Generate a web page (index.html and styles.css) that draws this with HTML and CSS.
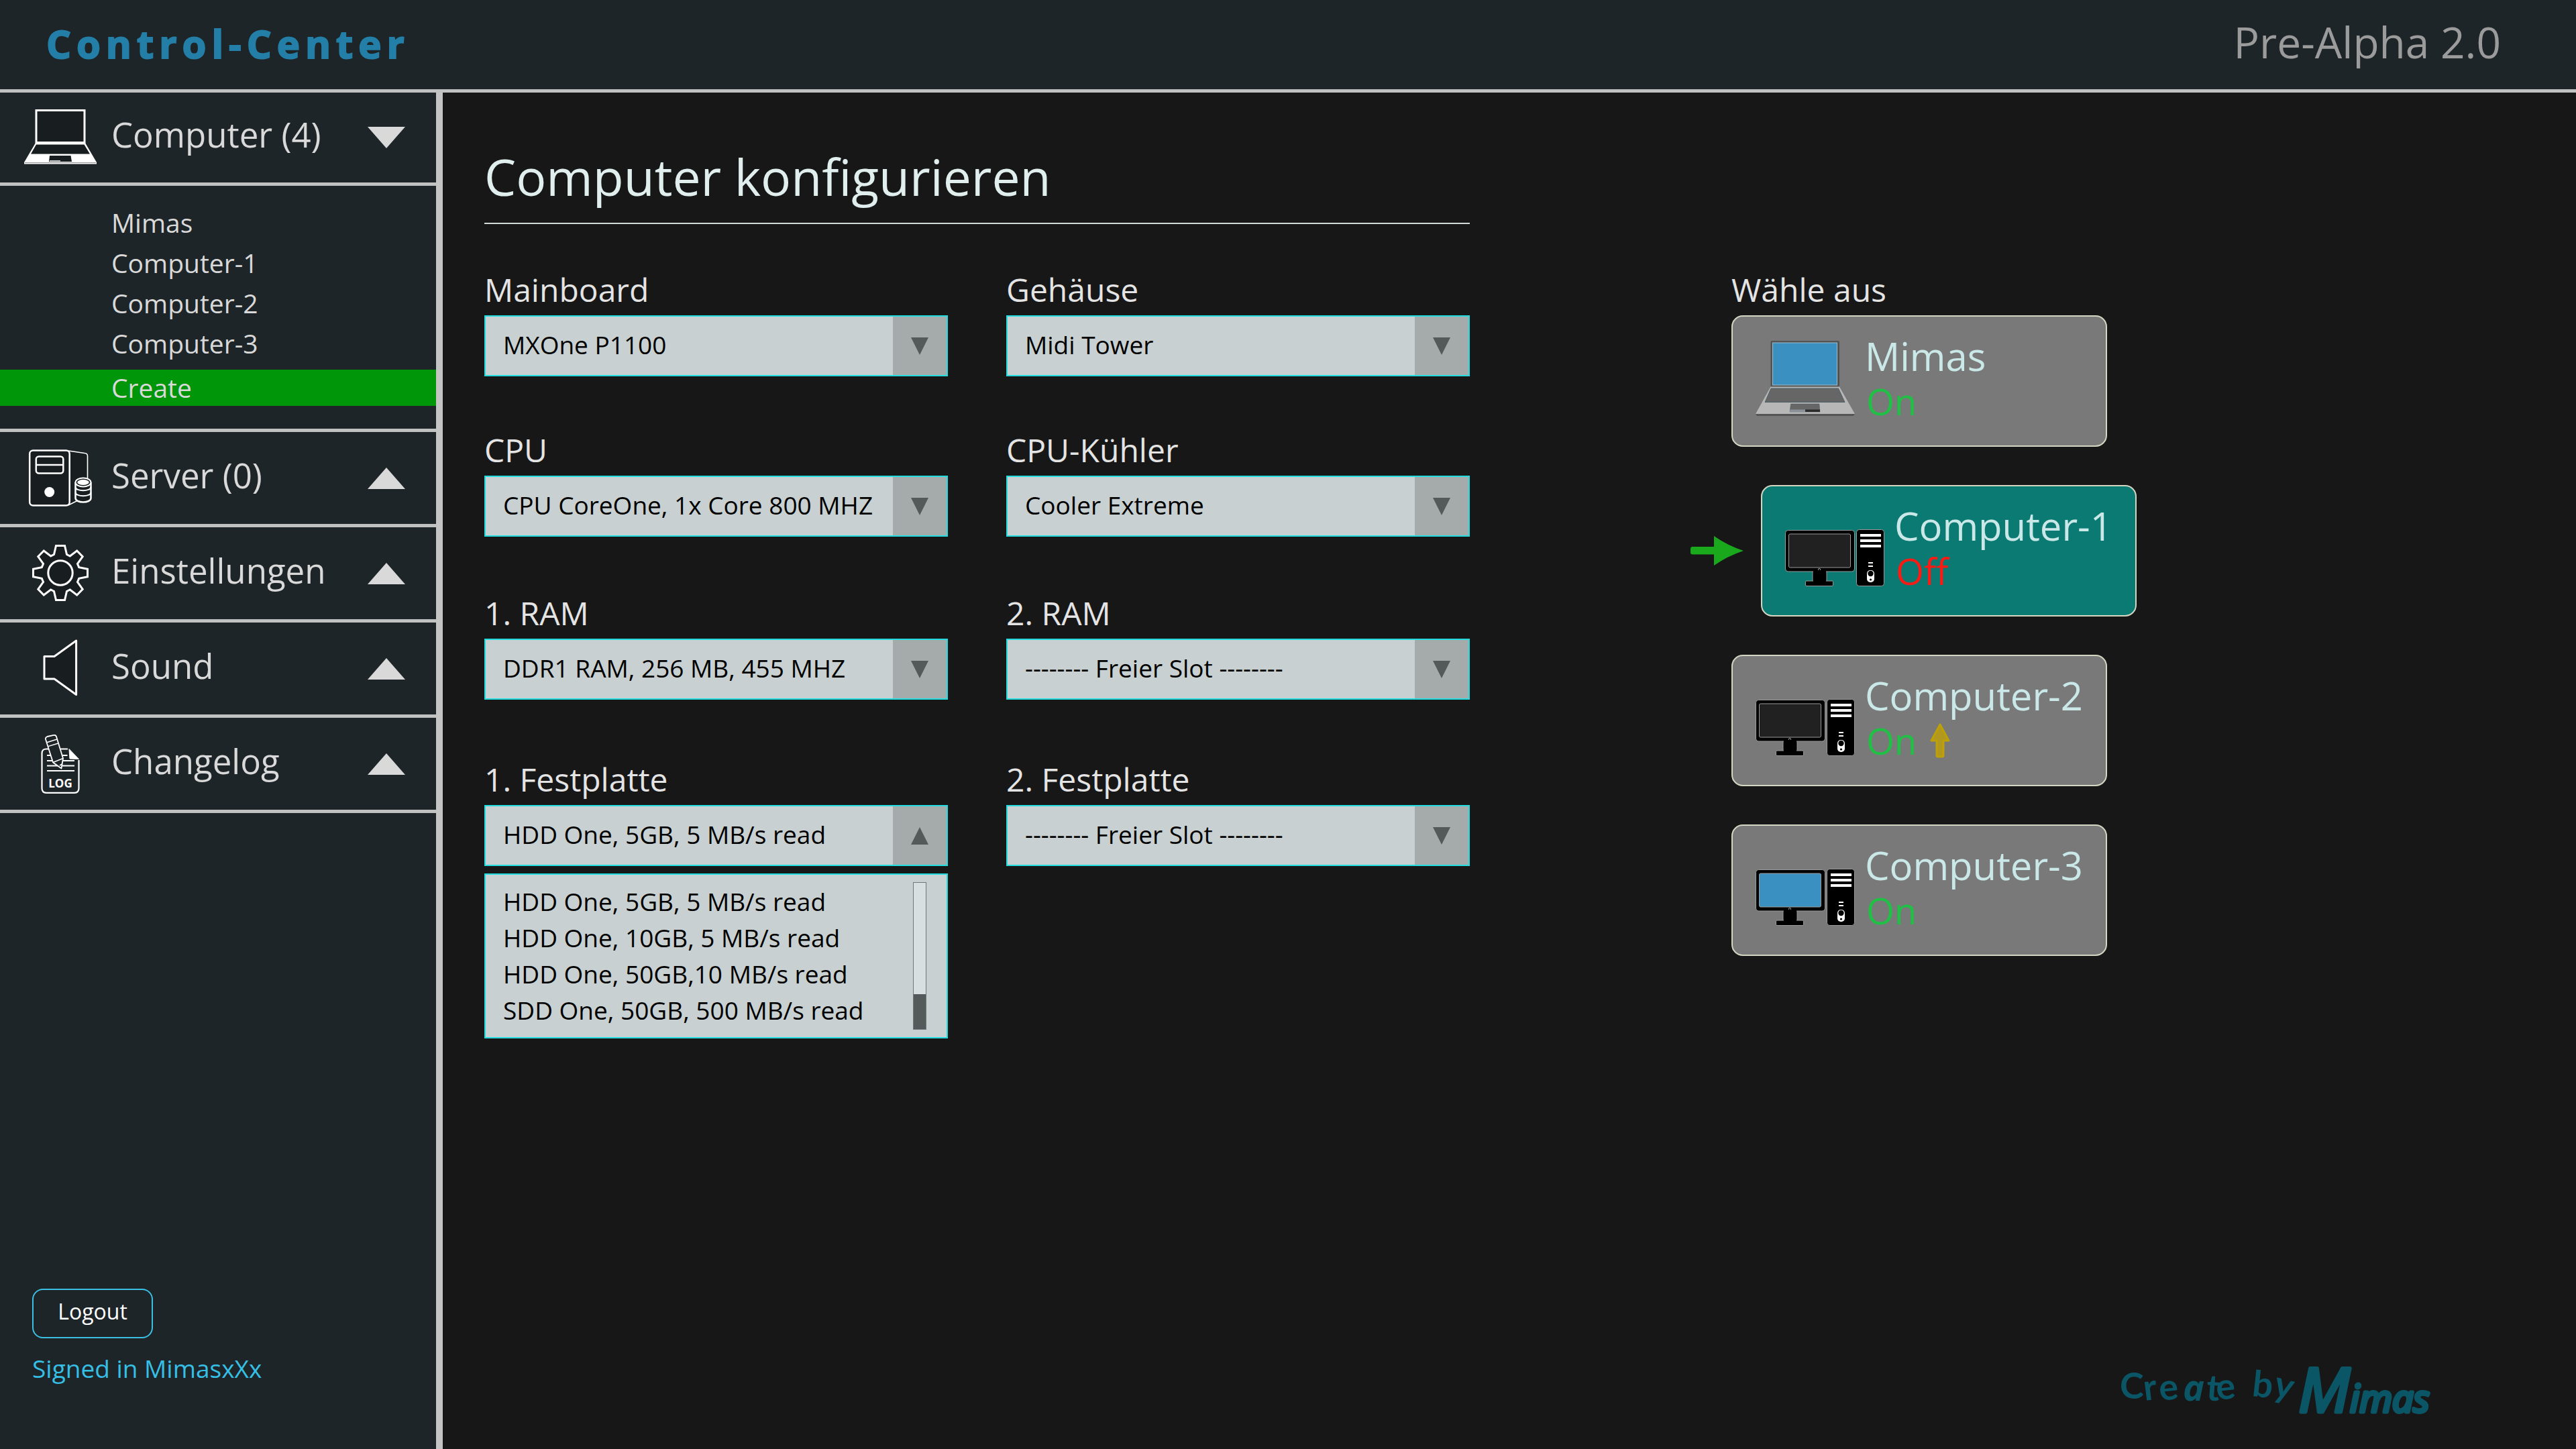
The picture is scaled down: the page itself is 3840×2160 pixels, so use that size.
FILE: index.html
```html
<!DOCTYPE html>
<html lang="de">
<head>
<meta charset="utf-8">
<meta name="viewport" content="width=device-width, initial-scale=1">
<title>Control-Center</title>
<link rel="stylesheet" href="styles.css">
</head>
<body>
<svg class="sprite" aria-hidden="true">
  <symbol id="pc" viewBox="0 0 148 114">
    <g stroke="#9a9a9a" stroke-width="1">
      <rect x="41" y="90" width="21" height="18" fill="#000"/>
      <rect x="30.500" y="106" width="41" height="7.500" rx="1.500" fill="#000"/>
      <rect x=".5" y="30.500" width="103" height="61.500" rx="4" fill="#000"/>
      <rect x="106.500" y="29.500" width="41" height="84" rx="4" fill="#000"/>
      <rect x="5.500" y="36" width="92" height="50" rx="2" fill="currentColor"/>
      <circle cx="51" cy="89" r="1.600" fill="#000"/>
    </g>
    <path d="M42 90h19v17H42z" fill="#000"/>
    <g fill="#fff">
      <path d="M112 36h31v4h-31zM112 44h31v4h-31zM112 52h31v4h-31zM124 78h7v2h-7zM124 83h7v2h-7z"/>
      <rect x="122" y="90" width="11" height="18" rx="5"/>
    </g>
    <circle cx="127.500" cy="95" r="4.200"/>
    <circle cx="127.500" cy="104" r="1.600"/>
  </symbol>
  <symbol id="laptop" viewBox="0 0 148 114">
    <rect x="22.500" y="1" width="102.500" height="69" rx="2" fill="#535353"/>
    <rect x="25.500" y="4" width="96" height="63" fill="#3a91c1" stroke="#9bbccb"/>
    <path d="M22.500 69.500H125L148 110H0z" fill="#b7b7b7"/>
    <path d="M0 110h148l-2 3H2z" fill="#555"/>
    <path d="M23 72h100.500l9.500 20.500H14z" fill="#666" stroke="#4d5f66"/>
    <path d="M52.500 95H95l1 12H51z" fill="#666" stroke="#4d5f66" stroke-width=".5"/>
    <path d="M51.500 103.500H74v3.500H51z" fill="#8a9199"/>
    <path d="M74 103.500h22v3.500H74z" fill="#2b2b2b"/>
  </symbol>
  <symbol id="up" viewBox="0 0 56 32"><path d="M28 0L56 32H0z" fill="#d9d9d9"/></symbol>
  <symbol id="down" viewBox="0 0 56 32"><path d="M0 0h56L28 32z" fill="#d9d9d9"/></symbol>
  <symbol id="caret-down" viewBox="0 0 26 26"><path d="M0 0h26L13 26z" fill="#545a5a"/></symbol>
  <symbol id="caret-up" viewBox="0 0 26 26"><path d="M13 0l13 26H0z" fill="#545a5a"/></symbol>
</svg>

<header class="topbar">
  <span class="brand">Control-Center</span>
  <span class="version">Pre-Alpha 2.0</span>
</header>

<div class="layout">
  <aside class="sidebar">
    <nav class="nav">
      <button class="nav-row" type="button" aria-expanded="true">
        <svg class="nav-icon" viewBox="0 0 108 88" aria-hidden="true">
          <g transform="translate(0 1)">
            <rect x="18" y="2.500" width="72" height="48" fill="#181d1f" stroke="#fff" stroke-width="3"/>
            <path d="M17 51h74l17 29v2.500H0V80z" fill="#fff"/>
            <path d="M18 53.500h71.500l8.500 14H10z" fill="#181d1f"/>
            <path d="M38 70h31.500l1.500 9H37z" fill="#181d1f"/>
            <path d="M38 77h16v1.500H38z" fill="#ddd"/>
            <path d="M1 80.500h106" stroke="#777" stroke-width=".8"/>
          </g>
        </svg>
        <span class="nav-label">Computer (4)</span>
        <svg class="nav-arrow" aria-hidden="true"><use href="#down"/></svg>
      </button>
      <div class="submenu">
        <ul class="sub-list">
          <li><a class="sub-link" href="#mimas">Mimas</a></li>
          <li><a class="sub-link" href="#computer-1">Computer-1</a></li>
          <li><a class="sub-link" href="#computer-2">Computer-2</a></li>
          <li><a class="sub-link" href="#computer-3">Computer-3</a></li>
        </ul>
        <a class="sub-link sub-create" href="#create" aria-current="page">Create</a>
      </div>
      <button class="nav-row" type="button" aria-expanded="false">
        <svg class="nav-icon" viewBox="0 0 108 88" aria-hidden="true" fill="#181d1f" stroke="#fff" stroke-width="2.500">
          <path d="M66 3L90 6.500q4 .5 4 4V70L66 84z" stroke="none"/>
          <path d="M66 3L90 6.500q4.500.5 4.500 4V44M66 84l14-7" stroke-width="1.600" fill="none"/>
          <rect x="8.200" y="2.500" width="59.500" height="82" rx="5"/>
          <rect x="17.800" y="11.500" width="40.500" height="25" rx="4"/>
          <path d="M18 24h40"/>
          <circle cx="37.700" cy="64.500" r="7.500" fill="#fff" stroke="none"/>
          <path d="M76.500 50v23.500c0 8 23 8 23 0V50"/>
          <ellipse cx="88" cy="50" rx="11.500" ry="6.500" stroke-width="2"/>
          <ellipse cx="88" cy="50" rx="8.800" ry="4" fill="#fff" stroke="none"/>
          <path d="M76.500 57c0 7 23 7 23 0M76.500 65c0 7 23 7 23 0" fill="none" stroke-width="2"/>
        </svg>
        <span class="nav-label">Server (0)</span>
        <svg class="nav-arrow" aria-hidden="true"><use href="#up"/></svg>
      </button>
      <button class="nav-row" type="button" aria-expanded="false">
        <svg class="nav-icon" viewBox="0 0 108 88" aria-hidden="true" fill="#181d1f" stroke="#fff" stroke-width="3">
          <g transform="translate(54 43)">
            <path d="M-6.500-40.500H6.500L9.500-27.500 14.300-25 24.700-33 33.200-24.300 25.500-13.500 27.700-8.400 40.500-5.700V5.700L27.700 8.400 25.500 13.500 33.200 24.300 24.700 33 14.300 25 9.500 27.500 6.500 40.500H-6.500L-9.500 27.500-14.300 25-24.700 33-33.200 24.300-25.500 13.500-27.700 8.400-40.500 5.700V-5.700L-27.700-8.400-25.500-13.500-33.200-24.300-24.700-33-14.300-25-9.500-27.500z"/>
            <circle r="18.200"/>
          </g>
        </svg>
        <span class="nav-label">Einstellungen</span>
        <svg class="nav-arrow" aria-hidden="true"><use href="#up"/></svg>
      </button>
      <button class="nav-row" type="button" aria-expanded="false">
        <svg class="nav-icon" viewBox="0 0 108 88" aria-hidden="true" fill="#181d1f" stroke="#fff" stroke-width="3" stroke-linejoin="round">
          <path d="M30 25.500h15L77.600 2v80.500L45 59H30z"/>
        </svg>
        <span class="nav-label">Sound</span>
        <svg class="nav-arrow" aria-hidden="true"><use href="#up"/></svg>
      </button>
      <button class="nav-row" type="button" aria-expanded="false">
        <svg class="nav-icon" viewBox="0 0 108 88" aria-hidden="true" fill="none" stroke="#fff" stroke-width="1.800" stroke-linejoin="round">
          <path d="M65 21.500H33q-6.500 0-6.500 6.500v52q0 6.800 6.500 6.800h42q6.500 0 6.500-6.800V38" stroke-width="2.200"/>
          <path d="M67 21.500L81.500 36.500 68 36z" fill="#fff" stroke-width="1"/>
          <path d="M34 31h30.500M34 39h41M34 46.500h41M34 54h41"/>
          <path d="M32 7q-.5-3 2.500-4L44 .9q3-.7 4 2L58 35.500 55.500 50.500 43 41.500z" fill="#1e2528"/>
          <path d="M33.800 11.700L49 7M35.600 17.600L51 13M43 41.500l15-6M53 46l3.500-2" stroke-width="1.500"/>
          <text class="log-text" x="54" y="79" text-anchor="middle">LOG</text>
        </svg>
        <span class="nav-label">Changelog</span>
        <svg class="nav-arrow" aria-hidden="true"><use href="#up"/></svg>
      </button>
    </nav>
    <div class="account">
      <button class="logout" type="button">Logout</button>
      <p class="signed">Signed in MimasxXx</p>
    </div>
  </aside>

  <main class="main">
    <div class="content">
      <h1 class="title">Computer konfigurieren</h1>

      <form class="form">
        <div class="field">
          <label for="mainboard">Mainboard</label>
          <div class="select">
            <select id="mainboard"><option>MXOne P1100</option></select>
            <span class="select-btn"><svg aria-hidden="true"><use href="#caret-down"/></svg></span>
          </div>
        </div>
        <div class="field">
          <label for="case">Gehäuse</label>
          <div class="select">
            <select id="case"><option>Midi Tower</option></select>
            <span class="select-btn"><svg aria-hidden="true"><use href="#caret-down"/></svg></span>
          </div>
        </div>
        <div class="field">
          <label for="cpu">CPU</label>
          <div class="select">
            <select id="cpu"><option>CPU CoreOne, 1x Core 800 MHZ</option></select>
            <span class="select-btn"><svg aria-hidden="true"><use href="#caret-down"/></svg></span>
          </div>
        </div>
        <div class="field">
          <label for="cooler">CPU-Kühler</label>
          <div class="select">
            <select id="cooler"><option>Cooler Extreme</option></select>
            <span class="select-btn"><svg aria-hidden="true"><use href="#caret-down"/></svg></span>
          </div>
        </div>
        <div class="field">
          <label for="ram1">1. RAM</label>
          <div class="select">
            <select id="ram1"><option>DDR1 RAM, 256 MB, 455 MHZ</option></select>
            <span class="select-btn"><svg aria-hidden="true"><use href="#caret-down"/></svg></span>
          </div>
        </div>
        <div class="field">
          <label for="ram2">2. RAM</label>
          <div class="select">
            <select id="ram2"><option>-------- Freier Slot --------</option></select>
            <span class="select-btn"><svg aria-hidden="true"><use href="#caret-down"/></svg></span>
          </div>
        </div>
        <div class="field">
          <label for="disk1">1. Festplatte</label>
          <div class="select">
            <select id="disk1"><option>HDD One, 5GB, 5 MB/s read</option></select>
            <span class="select-btn"><svg aria-hidden="true"><use href="#caret-up"/></svg></span>
          </div>
          <div class="dropdown">
            <ul class="options" role="listbox" aria-label="1. Festplatte">
              <li role="option">HDD One, 5GB, 5 MB/s read</li>
              <li role="option">HDD One, 10GB, 5 MB/s read</li>
              <li role="option">HDD One, 50GB,10 MB/s read</li>
              <li role="option">SDD One, 50GB, 500 MB/s read</li>
            </ul>
            <div class="scrollbar"><div class="thumb"></div></div>
          </div>
        </div>
        <div class="field">
          <label for="disk2">2. Festplatte</label>
          <div class="select">
            <select id="disk2"><option>-------- Freier Slot --------</option></select>
            <span class="select-btn"><svg aria-hidden="true"><use href="#caret-down"/></svg></span>
          </div>
        </div>
      </form>

      <section class="picker">
        <h2 class="picker-title">Wähle aus</h2>
        <ul class="cards">
          <li>
            <button class="card" type="button">
              <svg class="card-icon" aria-hidden="true"><use href="#laptop"/></svg>
              <span class="card-text"><span class="name">Mimas</span><span class="status on">On</span></span>
            </button>
          </li>
          <li class="current">
            <svg class="pointer" viewBox="0 0 80 44" aria-hidden="true">
              <path d="M3 16h32V0q20 14 44 22-24 8-44 22V27.500H3q-3 0-3-3V19q0-3 3-3z" fill="#1aa81c"/>
            </svg>
            <button class="card" type="button" aria-pressed="true">
              <svg class="card-icon off-screen" aria-hidden="true"><use href="#pc"/></svg>
              <span class="card-text"><span class="name">Computer-1</span><span class="status off">Off</span></span>
            </button>
          </li>
          <li>
            <button class="card" type="button">
              <svg class="card-icon off-screen" aria-hidden="true"><use href="#pc"/></svg>
              <span class="card-text"><span class="name">Computer-2</span><span class="status on">On
                <svg class="upgrade" viewBox="0 0 30 52" aria-hidden="true"><path d="M15 2L28 26H20v22q0 2-2 2h-6q-2 0-2-2V26H2z" fill="#b3981f" stroke="#bda106" stroke-width="3" stroke-linejoin="round"/></svg>
              </span></span>
            </button>
          </li>
          <li>
            <button class="card" type="button">
              <svg class="card-icon on-screen" aria-hidden="true"><use href="#pc"/></svg>
              <span class="card-text"><span class="name">Computer-3</span><span class="status on">On</span></span>
            </button>
          </li>
        </ul>
      </section>
    </div>

    <footer class="credit">
      <svg class="signature" viewBox="0 0 480 96" role="img" aria-label="Create by Mimas">
        <text class="credit-text" x="0 37 60" y="57 60 60" rotate="0 -7 -6">Cre</text>
        <text class="credit-text slanted" x="94" y="60">a</text>
        <text class="credit-text" x="128 145" y="59 59" rotate="4 -6">te</text>
        <text class="credit-text" x="196 227" y="53 52" rotate="6 14">by</text>
        <text class="mark" x="266" y="77"><tspan class="mark-m">M</tspan><tspan class="mark-s">imas</tspan></text>
      </svg>
    </footer>
  </main>
</div>
</body>
</html>
```
FILE: styles.css
```css
* {
  box-sizing: border-box;
}

body {
  margin: 0;
  min-height: 100vh;
  display: flex;
  flex-direction: column;
  background: #171717;
  color: #e4e4e4;
  font-family: "Open Sans", "Noto Sans", sans-serif;
}

ul {
  list-style: none;
  margin: 0;
  padding: 0;
}

button,
select {
  font: inherit;
  color: inherit;
}

.sprite {
  display: none;
}

/* Top bar */
.topbar {
  display: flex;
  justify-content: space-between;
  align-items: baseline;
  height: 138px;
  padding: 19px 112px 0 69px;
  background: #1e2528;
  border-bottom: 5px solid #c0c2c2;
}

.brand {
  color: #237fa8;
  font-size: 58px;
  font-weight: 700;
  letter-spacing: 8px;
  -webkit-text-stroke: 2px #237fa8;
}

.version {
  color: #9b9b9b;
  font-size: 64px;
}

.layout {
  flex: 1;
  display: flex;
}

/* Sidebar */
.sidebar {
  flex: 0 0 660px;
  display: flex;
  flex-direction: column;
  background: #1e2528;
  border-right: 10px solid #c4c4c4;
}

.nav-row {
  display: flex;
  align-items: center;
  gap: 22px;
  width: 100%;
  height: 142px;
  padding: 0 46px 0 36px;
  background: none;
  border: 0;
  border-bottom: 5px solid #c0c2c2;
  color: #d9d9d9;
  font-size: 51px;
  text-align: left;
}

.nav-row:first-child {
  height: 139px;
}

.nav-icon {
  flex: none;
  width: 108px;
  height: 88px;
}

.nav-label {
  flex: 1;
  padding-bottom: 10px;
}

.nav-arrow {
  flex: none;
  width: 56px;
  height: 32px;
}

.log-text {
  fill: #fff;
  stroke: none;
  font-size: 17px;
  font-weight: 700;
}

.submenu {
  padding: 28px 0 34px;
  border-bottom: 5px solid #c0c2c2;
}

.sub-list {
  display: flex;
  flex-direction: column;
  gap: 6px;
}

.sub-link {
  display: block;
  padding-left: 166px;
  color: #d9d9d9;
  font-size: 39px;
  line-height: 54px;
  text-decoration: none;
}

.sub-create {
  margin-top: 12px;
  background: #00960a;
}

.account {
  margin-top: auto;
  padding: 0 48px 94px;
}

.logout {
  display: block;
  width: 180px;
  height: 74px;
  padding: 0 0 8px;
  background: none;
  border: 2px solid #3bbfe2;
  border-radius: 16px;
  color: #fff;
  font-size: 32px;
}

.signed {
  margin: 19px 0 0;
  color: #36bfe4;
  font-size: 37px;
  line-height: 52px;
}

/* Main area */
.main {
  flex: 1;
  display: flex;
  flex-direction: column;
  justify-content: space-between;
  min-width: 0;
  padding: 73px 62px 36px;
}

.content {
  display: grid;
  grid-template-columns: minmax(0, 1469px) 604px;
  column-gap: 390px;
}

.title {
  margin: 0 0 66px;
  padding-bottom: 17px;
  border-bottom: 2px solid #d3dbda;
  color: #e0eeed;
  font-size: 75px;
  font-weight: 400;
  line-height: 104px;
}

.form {
  grid-column: 1;
  display: grid;
  grid-template-columns: 1fr 1fr;
  grid-template-rows: 239px 243px 248px auto;
  column-gap: 87px;
}

.field label,
.picker-title {
  display: block;
  margin: 0 0 6px;
  font-size: 48px;
  font-weight: 400;
  line-height: 64px;
}

.select {
  display: flex;
  height: 91px;
  background: #c8d0d1;
  border: 2px solid #22dcdf;
}

.select select {
  flex: 1;
  min-width: 0;
  padding: 0 0 4px 26px;
  appearance: none;
  background: none;
  border: 0;
  border-radius: 0;
  color: #000;
  font-size: 37px;
}

.select-btn {
  display: flex;
  align-items: center;
  justify-content: center;
  width: 80px;
  background: #a5abab;
}

.select-btn svg {
  width: 26px;
  height: 26px;
}

.dropdown {
  display: flex;
  justify-content: space-between;
  margin-top: 11px;
  padding: 11px 30px 11px 26px;
  background: #c8d0d1;
  border: 2px solid #22dcdf;
  color: #000;
  font-size: 37px;
  line-height: 54px;
}

.options {
  padding: 2px 0;
}

.scrollbar {
  display: flex;
  align-items: flex-end;
  width: 20px;
  background: #d8dfe1;
  border: 1px solid #707777;
}

.thumb {
  width: 100%;
  height: 24%;
  background: #545a5a;
}

/* Computer picker */
.cards {
  display: flex;
  flex-direction: column;
  gap: 57px;
}

.cards li {
  position: relative;
}

.cards .current {
  padding-left: 44px;
}

.pointer {
  position: absolute;
  left: -61px;
  top: 76px;
  width: 80px;
  height: 44px;
}

.card {
  display: flex;
  align-items: flex-start;
  gap: 15px;
  width: 560px;
  height: 196px;
  padding: 20px 0 0 34px;
  background: #797979;
  border: 2px solid #d4d6c2;
  border-radius: 17px;
  text-align: left;
}

.current .card {
  background: #0a7a72;
}

.card-icon {
  flex: none;
  width: 148px;
  height: 114px;
  margin-top: 15px;
}

.off-screen {
  color: #212121;
}

.on-screen {
  color: #3a91c1;
}

.card-text {
  display: flex;
  flex-direction: column;
}

.name {
  color: #cbe8e8;
  font-size: 58px;
  line-height: 78px;
}

.status {
  display: flex;
  align-items: center;
  gap: 20px;
  padding-left: 2px;
  font-size: 54px;
  line-height: 56px;
}

.on {
  color: #1fc145;
}

.off {
  color: #fb1a14;
}

.upgrade {
  width: 30px;
  height: 52px;
}

/* Signature */
.credit {
  align-self: flex-end;
  padding-right: 138px;
}

.signature {
  display: block;
  width: 480px;
  height: 96px;
  overflow: visible;
  fill: #0b5666;
}

.credit-text {
  font-family: Lato, "Open Sans", sans-serif;
  font-size: 54px;
  font-weight: 700;
}

.slanted {
  font-family: "Open Sans", sans-serif;
  font-style: italic;
}

.mark {
  font-family: "Open Sans", sans-serif;
  font-style: italic;
  stroke: #0b5666;
  stroke-width: 5px;
  stroke-linejoin: round;
}

.mark-m {
  font-size: 92px;
}

.mark-s {
  font-size: 56px;
}
```
